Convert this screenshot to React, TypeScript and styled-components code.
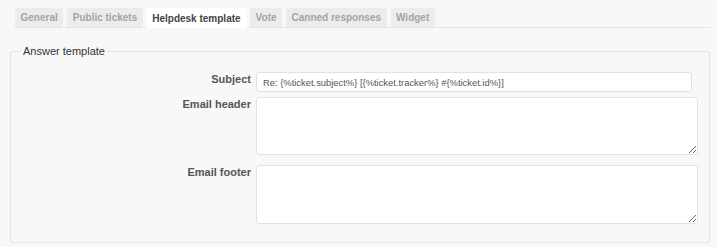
import React from "react";
import styled, { createGlobalStyle } from "styled-components";

const Global = createGlobalStyle`
  html, body { margin: 0; padding: 0; background: #f8f8f8; }
  body { font-family: "Liberation Sans", Arial, sans-serif; color: #333; }
`;

const Page = styled.div`
  width: 717px;
  height: 247px;
  box-sizing: border-box;
  padding-top: 8px;
  background: #f8f8f8;
  overflow: hidden;
`;

const TabBar = styled.ul`
  list-style: none;
  margin: 0 6px 0 15px;
  padding: 0;
  display: flex;
  gap: 4px;
  height: 19px;
  border-bottom: 1px solid #e6e6e6;
`;

const Tab = styled.li<{ $active?: boolean }>`
  height: ${(p) => (p.$active ? "20px" : "19px")};
  display: flex;
  align-items: center;
  font-size: 10px;
  font-weight: bold;
  color: ${(p) => (p.$active ? "#444" : "#a4a4a4")};
  background: ${(p) => (p.$active ? "#fff" : "#ececec")};
  margin: ${(p) => (p.$active ? "0 -1px" : "0")};
  padding: ${(p) => (p.$active ? "0 6.5px" : "0 5.5px")};
  white-space: nowrap;
`;

const Fieldset = styled.fieldset`
  margin: 17px 7px 0 10px;
  padding: 14px 0 18px 0;
  border: 1px solid #e3e3e3;
  border-radius: 3px;
  min-width: 0;
`;

const Legend = styled.legend`
  margin-left: 10px;
  padding: 0 2px 0 2px;
  font-size: 11px;
  line-height: 13px;
  color: #333;
`;

const Row = styled.div<{ $gap?: number }>`
  display: grid;
  grid-template-columns: 240px auto;
  column-gap: 5px;
  align-items: start;
  margin-top: ${(p) => p.$gap ?? 0}px;
`;

const Label = styled.label`
  text-align: right;
  font-size: 11px;
  line-height: 13px;
  font-weight: bold;
  color: #555;
  padding-top: 1px;
`;

const TextInput = styled.input`
  box-sizing: border-box;
  width: 436px;
  height: 20px;
  margin: 0;
  padding: 0 6px;
  border: 1px solid #e2e2e2;
  border-radius: 3px;
  background: #fff;
  font-family: "Liberation Sans", Arial, sans-serif;
  font-size: 9.4px;
  color: #555;
  outline: none;
`;

const TextArea = styled.textarea<{ $h: number }>`
  box-sizing: border-box;
  display: block;
  width: 442px;
  height: ${(p) => p.$h}px;
  margin: 0;
  padding: 3px 6px;
  border: 1px solid #e2e2e2;
  border-radius: 3px;
  background: #fff;
  font-family: "Liberation Sans", Arial, sans-serif;
  font-size: 10px;
  outline: none;
`;

const tabs = ["General", "Public tickets", "Helpdesk template", "Vote", "Canned responses", "Widget"];

export default function App() {
  return (
    <Page>
      <Global />
      <TabBar>
        {tabs.map((t) => (
          <Tab key={t} $active={t === "Helpdesk template"}>{t}</Tab>
        ))}
      </TabBar>
      <Fieldset>
        <Legend>Answer template</Legend>
        <Row>
          <Label>Subject</Label>
          <TextInput defaultValue="Re: {%ticket.subject%} [{%ticket.tracker%} #{%ticket.id%}]" />
        </Row>
        <Row $gap={5}>
          <Label>Email header</Label>
          <TextArea $h={58} />
        </Row>
        <Row $gap={10}>
          <Label>Email footer</Label>
          <TextArea $h={59} />
        </Row>
      </Fieldset>
    </Page>
  );
}
